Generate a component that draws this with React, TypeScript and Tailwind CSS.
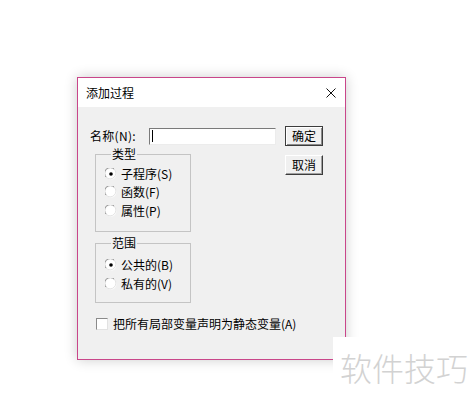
const font = { fontFamily: '"Noto Sans CJK SC", "Liberation Sans", sans-serif' };

// 经典 3D 单选按钮
const Radio = ({ checked }: { checked?: boolean }) => (
  <svg width="12" height="12" viewBox="0 0 12 12" className="shrink-0">
    <circle cx="6" cy="6" r="5.5" fill="#fff" />
    <path d="M1.2 9.2A5.5 5.5 0 0 1 9.2 1.2" fill="none" stroke="#8c8c8c" strokeWidth="1" />
    <path d="M9.2 1.2A5.5 5.5 0 0 1 1.2 9.2" fill="none" stroke="#e3e3e3" strokeWidth="1" />
    {checked && <circle cx="6" cy="6" r="1.8" fill="#000" />}
  </svg>
);

const Option = ({ label, checked, h }: { label: string; checked?: boolean; h: string }) => (
  <div className={`flex items-center gap-[4px] ${h}`}>
    <Radio checked={checked} />
    <span className="text-[12px] leading-none text-black">{label}</span>
  </div>
);

export default function App() {
  return (
    <div className="relative w-[476px] h-[408px] overflow-hidden bg-white pt-[77px] pl-[77px]" style={font}>
      {/* 对话框：粉色窗口边框 */}
      <div className="w-[269px] h-[283px] p-px bg-[#c9468a] shadow-[0_0_12px_rgba(0,0,0,0.2)]">
        <div className="flex flex-col h-full bg-[#f0f0f0]">
          <div className="flex items-center justify-between h-[29px] bg-white pl-[8px] pr-[9px]">
            <span className="text-[12px] text-black">添加过程</span>
            <svg width="10" height="10" viewBox="0 0 10 10">
              <path d="M0.5 0.5L9.5 9.5M9.5 0.5L0.5 9.5" stroke="#111" strokeWidth="1" />
            </svg>
          </div>

          <div className="flex-1 pt-[19px] pl-[12px]">
            <div className="flex">
              <div className="w-[186px]">
                <div className="flex items-center h-[20px]">
                  <span className="w-[59px] text-[12px] tracking-[0.3px] text-black">名称(N):</span>
                  <div className="flex items-center w-[127px] h-[17px] bg-white border-t border-l border-[#7a7a7a] border-r-[#ececec] border-b-[#ececec] border-r border-b">
                    <span className="ml-[2px] w-px h-[12px] bg-black" />
                  </div>
                </div>

                <fieldset className="ml-[5px] mt-0 w-[96px] h-[86px] border border-[#c4c4c4] pl-[9px] pt-[3px]">
                  <legend className="ml-[6px] px-[1px] text-[12px] leading-[16px] text-black">类型</legend>
                  <Option label="子程序(S)" checked h="h-[18px]" />
                  <Option label="函数(F)" h="h-[18px]" />
                  <Option label="属性(P)" h="h-[19px]" />
                </fieldset>

                <fieldset className="ml-[5px] mt-[3px] w-[96px] h-[68px] border border-[#c4c4c4] pl-[9px] pt-[4px]">
                  <legend className="ml-[6px] px-[1px] text-[12px] leading-[16px] text-black">范围</legend>
                  <Option label="公共的(B)" checked h="h-[19px]" />
                  <Option label="私有的(V)" h="h-[19px]" />
                </fieldset>
              </div>

              <div className="ml-[9px] flex flex-col gap-[9px]">
                <button className="w-[38px] h-[20px] bg-[#f0f0f0] border border-[#3c3c3c] shadow-[inset_1px_1px_0_#fff,inset_-1px_-1px_0_#8a8a8a] text-[12px] leading-none text-black">
                  确定
                </button>
                <button className="w-[38px] h-[20px] bg-[#f0f0f0] border border-t-white border-l-white border-r-[#3c3c3c] border-b-[#3c3c3c] shadow-[inset_-1px_-1px_0_#a0a0a0] text-[12px] leading-none text-black">
                  取消
                </button>
              </div>
            </div>

            <div className="flex items-center gap-[5px] mt-[13px] ml-[6px] h-[16px]">
              <span className="w-[12px] h-[12px] bg-white border border-t-[#8a8a8a] border-l-[#8a8a8a] border-r-[#e2e2e2] border-b-[#e2e2e2]" />
              <span className="text-[12px] leading-none text-black">把所有局部变量声明为静态变量(A)</span>
            </div>
          </div>
        </div>
      </div>

      {/* 水印 */}
      <div className="absolute left-[333px] top-[337px] right-0 bottom-0 bg-white pl-[7px] pt-[14px]">
        <span className="text-[32px] font-light leading-none text-[#d2d2d2] whitespace-nowrap">软件技巧</span>
      </div>
    </div>
  );
}
